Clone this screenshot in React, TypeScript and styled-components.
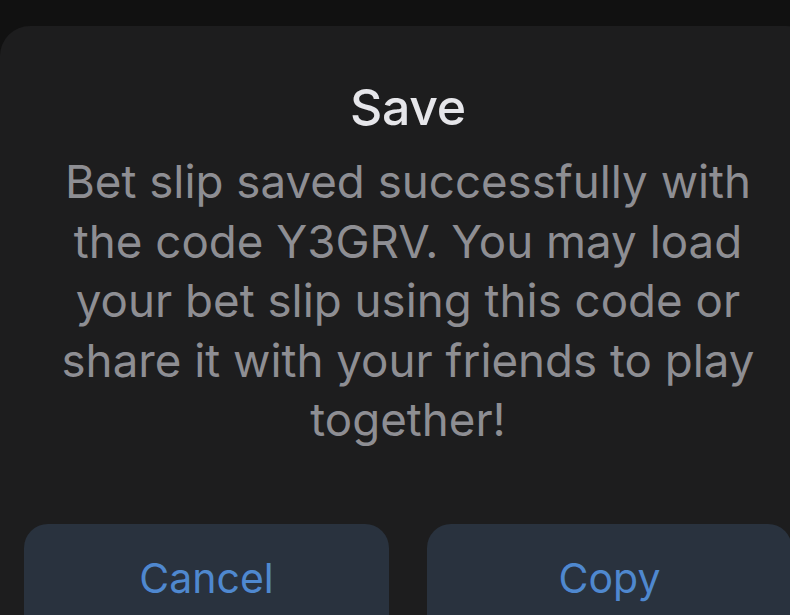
import styled, { createGlobalStyle } from 'styled-components'

const GlobalStyle = createGlobalStyle`
    html, body {
        margin: 0;
        padding: 0;
        background: #111111;
        overflow: hidden;
    }
    body {
        font-family: Inter, "Noto Sans", sans-serif;
        -webkit-font-smoothing: antialiased;
    }
`

const Screen = styled.div`
    width: 816px;
    height: 615px;
    display: flex;
    flex-direction: column;
    background: #111111;
    overflow: hidden;
`

const StatusStrip = styled.div`
    height: 26px;
    flex-shrink: 0;
    background: #111111;
`

const Sheet = styled.div`
    flex: 1;
    min-height: 0;
    display: flex;
    flex-direction: column;
    align-items: center;
    background: #1d1d1e;
    border-radius: 30px 30px 0 0;
    padding: 52px 24px 0;
    overflow: hidden;
`

const Title = styled.h1`
    margin: 0;
    font-size: 50px;
    line-height: 58px;
    font-weight: 500;
    color: #e6e6ea;
    letter-spacing: -0.3px;
`

const Message = styled.p`
    margin: 16px 0 0;
    width: 740px;
    text-align: center;
    font-size: 45.7px;
    line-height: 59.5px;
    font-weight: 400;
    color: #8e8e93;
`

const Actions = styled.div`
    margin-top: 74px;
    width: 100%;
    display: grid;
    grid-template-columns: 1fr 1fr;
    gap: 38px;
    flex-shrink: 0;
`

const ActionButton = styled.button`
    height: 120px;
    border: none;
    border-radius: 24px;
    background: #29323e;
    color: #4f88cf;
    font-family: inherit;
    font-size: 41px;
    line-height: 45px;
    font-weight: 400;
    padding: 32px 0 0;
    display: flex;
    justify-content: center;
    align-items: flex-start;
    cursor: pointer;
`

const App = () => {
    return (
        <>
            <GlobalStyle />
            <Screen>
                <StatusStrip />
                <Sheet>
                    <Title>Save</Title>
                    <Message>
                        Bet slip saved successfully with the code Y3GRV. You may load your bet slip using this code or share it with your friends to play together!
                    </Message>
                    <Actions>
                        <ActionButton>Cancel</ActionButton>
                        <ActionButton>Copy</ActionButton>
                    </Actions>
                </Sheet>
            </Screen>
        </>
    )
}

export default App
